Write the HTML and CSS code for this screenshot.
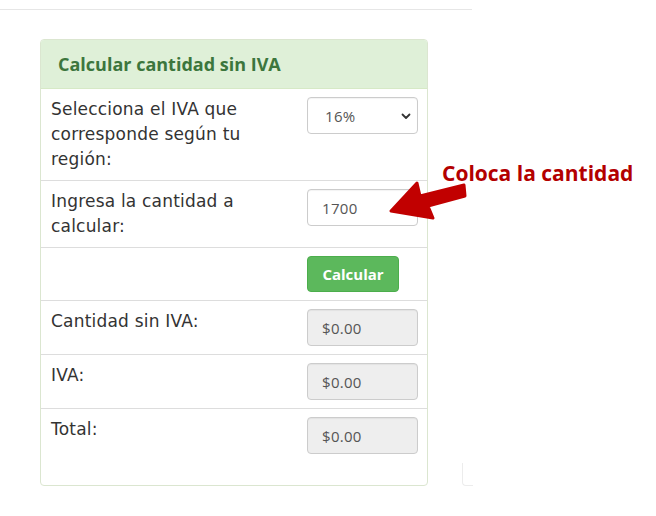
FILE: index.html
```html
<!DOCTYPE html>
<html lang="es">
<head>
<meta charset="utf-8">
<title>Calcular cantidad sin IVA</title>
<link rel="stylesheet" href="styles.css">
</head>
<body>
<div class="page">
  <div class="rule"></div>
  <div class="panel">
    <div class="panel-heading">Calcular cantidad sin IVA</div>
    <div class="panel-body">
      <div class="row first">
        <div class="label">Selecciona el IVA que corresponde según tu región:</div>
        <div class="control select-wrap">
          <select class="field">
            <option>16%</option>
            <option>8%</option>
          </select>
          <svg class="chevron" width="10" height="7" viewBox="0 0 10 7"><path d="M1.5 1.5 L5 5 L8.5 1.5" fill="none" stroke="#333" stroke-width="1.8" stroke-linecap="round" stroke-linejoin="round"/></svg>
        </div>
      </div>
      <div class="row">
        <div class="label">Ingresa la cantidad a calcular:</div>
        <div class="control"><input class="field" type="text" value="1700"></div>
      </div>
      <div class="row">
        <div class="label"></div>
        <div class="control"><button class="btn">Calcular</button></div>
      </div>
      <div class="row">
        <div class="label">Cantidad sin IVA:</div>
        <div class="control"><input class="field readonly" type="text" value="$0.00" readonly></div>
      </div>
      <div class="row">
        <div class="label">IVA:</div>
        <div class="control"><input class="field readonly" type="text" value="$0.00" readonly></div>
      </div>
      <div class="row last">
        <div class="label">Total:</div>
        <div class="control"><input class="field readonly" type="text" value="$0.00" readonly></div>
      </div>
    </div>
  </div>
  <div class="ghost-corner"></div>
  <div class="note">Coloca la cantidad</div>
  <svg class="arrow" width="656" height="516" viewBox="0 0 656 516">
    <polygon points="391,211 417,183 420,196 464,185 465,196 428,206 433,218" fill="#c10000" stroke="#c10000" stroke-width="3" stroke-linejoin="round"/>
  </svg>
</div>
</body>
</html>
```

FILE: styles.css
```css
html, body {
  margin: 0;
  padding: 0;
  background: #ffffff;
}

.page {
  position: relative;
  width: 656px;
  height: 516px;
  font-family: "Open Sans", "Liberation Sans", sans-serif;
  color: #333333;
  padding-top: 9px;
  box-sizing: border-box;
}

.rule {
  width: 472px;
  height: 1px;
  background: #e6e6e6;
}

.panel {
  margin: 29px 0 0 40px;
  width: 388px;
  box-sizing: border-box;
  border: 1px solid #dbe6d0;
  border-radius: 4px;
  background: #fff;
}

.panel-heading {
  height: 49px;
  box-sizing: border-box;
  background: #dff0d8;
  border-bottom: 1px solid #d6e9c6;
  border-radius: 3px 3px 0 0;
  color: #3c763d;
  font-weight: 700;
  font-size: 18px;
  line-height: 48px;
  padding-left: 17px;
}

.panel-body {
  padding-bottom: 23px;
}

.row {
  display: grid;
  grid-template-columns: 246px 111px;
  column-gap: 10px;
  align-items: start;
  padding: 8px 9px 8px 10px;
  border-top: 1px solid #dddddd;
}

.row.first {
  border-top: none;
}

.label {
  font-family: "DejaVu Sans", "Open Sans", sans-serif;
  font-size: 17px;
  letter-spacing: 0.2px;
  line-height: 25px;
  color: #333333;
}

.control {
  position: relative;
}

.field {
  display: block;
  width: 111px;
  height: 37px;
  box-sizing: border-box;
  border: 1px solid #cccccc;
  border-radius: 4px;
  background: #ffffff;
  font-family: "Open Sans", "Liberation Sans", sans-serif;
  font-size: 15px;
  letter-spacing: 0.3px;
  color: #555555;
  padding: 0 0 0 14px;
  margin: 0;
  outline: none;
  box-shadow: inset 0 1px 1px rgba(0, 0, 0, 0.05);
}

select.field {
  -webkit-appearance: none;
  appearance: none;
  padding-left: 17px;
}

.chevron {
  position: absolute;
  right: 7px;
  top: 16px;
  pointer-events: none;
}

.field.readonly {
  background: #eeeeee;
}

.btn {
  display: block;
  width: 92px;
  height: 36px;
  box-sizing: border-box;
  border: 1px solid #4cae4c;
  border-radius: 4px;
  background: #5cb85c;
  color: #ffffff;
  font-family: "Open Sans", "Liberation Sans", sans-serif;
  font-weight: 700;
  font-size: 15px;
  padding: 0;
}

.ghost-corner {
  position: absolute;
  left: 462px;
  top: 463px;
  width: 10px;
  height: 22px;
  border-left: 1px solid #ececec;
  border-bottom: 1px solid #ececec;
  border-bottom-left-radius: 4px;
}

.note {
  position: absolute;
  left: 442px;
  top: 161px;
  font-size: 21px;
  line-height: 24px;
  font-weight: 700;
  color: #b30000;
  white-space: nowrap;
}

.arrow {
  position: absolute;
  left: 0;
  top: 0;
  pointer-events: none;
}
```
